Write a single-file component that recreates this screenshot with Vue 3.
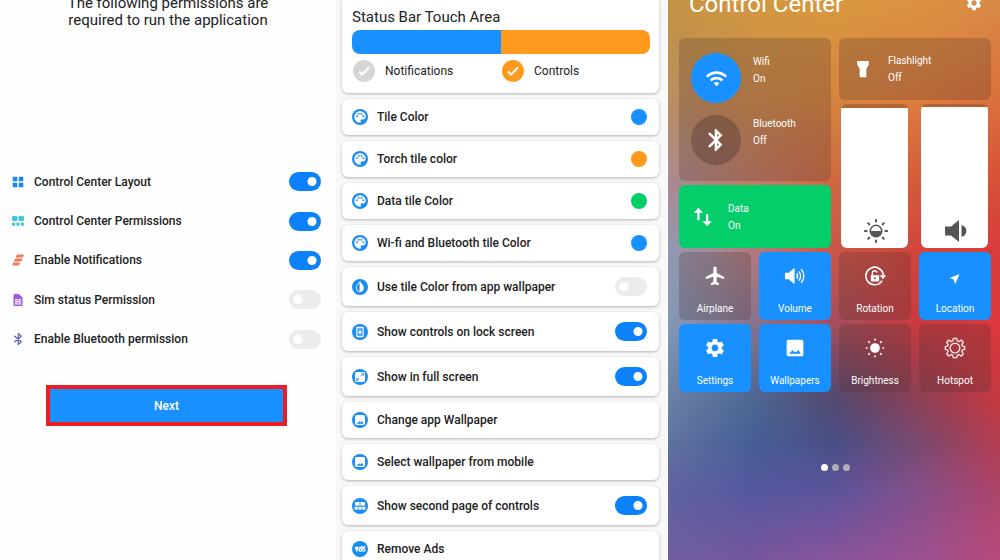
<script setup>
import { ref } from 'vue'

const gear = '<path fill-rule="evenodd" d="M19.14 12.94c.04-.3.06-.61.06-.94 0-.32-.02-.64-.07-.94l2.03-1.58c.18-.14.23-.41.12-.61l-1.92-3.32c-.12-.22-.37-.29-.59-.22l-2.39.96c-.5-.38-1.03-.7-1.62-.94l-.36-2.54c-.04-.24-.24-.41-.48-.41h-3.84c-.24 0-.43.17-.47.41l-.36 2.54c-.59.24-1.13.57-1.62.94l-2.39-.96c-.22-.08-.47 0-.59.22L2.74 8.87c-.12.21-.08.47.12.61l2.03 1.58c-.05.3-.09.63-.09.94s.02.64.07.94l-2.03 1.58c-.18.14-.23.41-.12.61l1.92 3.32c.12.22.37.29.59.22l2.39-.96c.5.38 1.03.7 1.62.94l.36 2.54c.05.24.24.41.48.41h3.84c.24 0 .44-.17.47-.41l.36-2.54c.59-.24 1.13-.56 1.62-.94l2.39.96c.22.08.47 0 .59-.22l1.92-3.32c.12-.22.07-.47-.12-.61l-2.01-1.58zM12 15.6c-1.98 0-3.6-1.62-3.6-3.6s1.62-3.6 3.6-3.6 3.6 1.62 3.6 3.6-1.62 3.6-3.6 3.6z"/>'
const disc = '<circle cx="12" cy="12" r="12" fill="#1b8cf2"/>'
const picture = '<path fill="#fff" fill-rule="evenodd" d="M7 4.500h10a2.500 2.500 0 0 1 2.500 2.500v10a2.500 2.500 0 0 1-2.500 2.500H7A2.500 2.500 0 0 1 4.500 17V7A2.500 2.500 0 0 1 7 4.500zM7 17.500h10.500l-2.700-4.500-1.900 2.700-2-2z"/>'

const icons = {
  gear,
  cog: '<g transform="translate(-1.600 -1.600) scale(1.130)">' + gear + '</g>',
  grid: '<path fill="#1787f5" d="M1.500 1.500h9v9h-9zM13.500 1.500h9v9h-9zM1.500 13.500h9v9h-9zM13.500 13.500h9v9h-9z"/>',
  blocks: '<g fill="#3fc8dc"><rect x="0" y="2" width="11" height="10" rx="2.500"/><rect x="13" y="2" width="11" height="10" rx="2.500"/><rect x="0" y="15" width="6.500" height="6.500" rx="2"/><rect x="8.700" y="15" width="6.500" height="6.500" rx="2"/><rect x="17.500" y="15" width="6.500" height="6.500" rx="2"/></g>',
  bars: '<g fill="#f0795f"><path d="M11 1h12c1 0 1 1 .5 2l-1 2.500c-.4 1-1 1.500-2 1.500h-12c-1 0-1-1-.5-2l1-2.500C9.400 1.500 10 1 11 1z"/><path d="M7.500 9h12c1 0 1 1 .5 2l-1 2.500c-.4 1-1 1.500-2 1.500H5c-1 0-1-1-.5-2l1-2.500C5.900 9.500 6.500 9 7.500 9z"/><path d="M4 17h11c1 0 1 1 .5 2l-1 2.500c-.4 1-1 1.500-2 1.500h-11c-1 0-1-1-.5-2l1-2.500C2.400 17.500 3 17 4 17z"/></g>',
  sim: '<path fill="#a05be0" d="M5 0h9l7 7v15a2 2 0 0 1-2 2H5a2 2 0 0 1-2-2V2a2 2 0 0 1 2-2z"/><path fill="#fff" d="M6 10h12v11H6z"/><path stroke="#a05be0" stroke-width="1.500" d="M6 13.500h12M6 17.500h12M12 10v3.500M12 17.500V21"/>',
  btLeft: '<path fill="none" stroke="#5c5ab4" stroke-width="2.200" stroke-linecap="round" stroke-linejoin="round" d="M5 6l13.500 11.500-6 5.500V1l6 5.500L5 18"/>',
  palette: disc + '<path fill="#fff" transform="translate(1.800 1.800) scale(.85)" d="M12 2C6.500 2 2 6.500 2 12s4.500 10 10 10c1 0 1.700-.7 1.700-1.700 0-.4-.15-.8-.4-1.100-.26-.3-.42-.7-.42-1.100 0-.9.7-1.600 1.600-1.600H17c3 0 5-2.500 5-5.500C22 6 17.500 2 12 2zM6.500 12.200a1.700 1.700 0 1 1 0-3.400 1.700 1.700 0 0 1 0 3.400zM9.600 8a1.700 1.700 0 1 1 0-3.400 1.700 1.700 0 0 1 0 3.400zM14.600 8a1.700 1.700 0 1 1 0-3.400 1.700 1.700 0 0 1 0 3.400zM17.800 12.200a1.700 1.700 0 1 1 0-3.400 1.700 1.700 0 0 1 0 3.400z"/>',
  drop: disc + '<path fill="#fff" d="M12 4c3.500 3.700 5.800 6.300 5.800 9.400A5.900 5.900 0 0 1 12 19.500z"/><path fill="none" stroke="#fff" stroke-width="1.300" d="M12 4c-3.500 3.700-5.500 6.300-5.500 9.400a5.700 5.700 0 0 0 5.500 5.900z"/>',
  lock: disc + '<rect x="6.500" y="4" width="11" height="16" rx="1.500" fill="#fff"/><rect x="8.300" y="6.500" width="7.400" height="11" fill="#1b8cf2"/><rect x="9.800" y="10.800" width="4.400" height="4" fill="#fff"/><path fill="none" stroke="#fff" stroke-width="1" d="M10.800 11V9.500a1.200 1.200 0 0 1 2.400 0V11"/>',
  full: disc + '<rect x="4.500" y="4.500" width="15" height="15" rx="2.500" fill="#fff"/><path fill="none" stroke="#1b8cf2" stroke-width="1.300" d="M14 7.300h3v3M17 7.300l-3.600 3.500M10.600 13.400L7 17M7 13.700V17h3.200"/>',
  picture: disc + picture,
  second: disc + '<g fill="#fff"><rect x="4.500" y="6" width="7" height="5.500" rx="1.300"/><rect x="12.500" y="6" width="7" height="5.500" rx="1.300"/><rect x="4" y="13" width="4.500" height="4.500" rx="1"/><rect x="9.800" y="13" width="4.500" height="4.500" rx="1"/><rect x="15.500" y="13" width="4.500" height="4.500" rx="1"/></g>',
  ads: disc + '<g fill="none" stroke="#fff" stroke-width="2" stroke-linecap="round"><circle cx="6.800" cy="10.700" r="1.500"/><path d="M9 9.500c0 3-.5 4.500-2 5.500"/><circle cx="12.800" cy="13.500" r="2"/><path d="M11.500 9.500L15 8.500v6"/><path d="M19.500 9c-2-1-3.300 1-1.800 2.500 2.300 1 2 4-.5 3.700"/></g>',
  wifi: '<path d="M1 9l2 2c4.970-4.970 13.030-4.970 18 0l2-2C16.930 2.930 7.080 2.930 1 9zm8 8l3 3 3-3c-1.650-1.660-4.340-1.660-6 0zm-4-4l2 2c2.760-2.760 7.240-2.760 10 0l2-2C15.140 9.140 8.870 9.140 5 13z"/>',
  bt: '<path fill-rule="evenodd" stroke="#fff" stroke-width=".4" d="M17.710 7.710L12 2h-1v7.590L6.410 5 5 6.410 10.590 12 5 17.590 6.410 19 11 14.410V22h1l5.710-5.710-4.300-4.290 4.300-4.290zM13 5.830l1.880 1.880L13 9.590V5.830zm1.880 10.460L13 18.170v-3.760l1.880 1.880z"/>',
  torch: '<path d="M5 2.500h14V6.500L16 12v9c0 .6-.4 1-1 1H9c-.6 0-1-.4-1-1v-9L5 6.500z"/>',
  data: '<path d="M6.500 1L1 6.800h4.200V16h2.600V6.800H12zM17 23l5.500-5.800h-4.200V8.500h-2.600v8.700h-4.200z"/>',
  plane: '<path d="M23 15.500v-2.200l-9-5V2.500a2 2 0 0 0-4 0v5.800l-9 5v2.200l9-2.500v6l-2.800 2V23l4.800-1 4.800 1v-2L14 19v-6z"/>',
  volume: '<path d="M0 8v8h4.500l7 6V2l-7 6z"/><g fill="none" stroke="#fff" stroke-width="1.700"><path d="M14 9c1.300 1.700 1.300 4.300 0 6M16.500 6.500c3 3 3 8 0 11M19.300 4c4.500 4.500 4.500 11.500 0 16"/></g>',
  rotation: '<path fill="none" stroke="#fff" stroke-width="2" d="M20.500 17.500A10.500 10.500 0 1 1 22 11"/><path d="M17.500 11h8l-4 5z"/><path fill-rule="evenodd" d="M7 11h10v7.500H7zM12 13.400a1.300 1.300 0 1 0 0 2.600 1.300 1.300 0 0 0 0-2.600z"/><path fill="none" stroke="#fff" stroke-width="1.700" d="M8.800 11V8.700c0-4 5.500-4 5.500-.5"/>',
  location: '<path d="M17.500 9.500L6.300 14v.8l4.200 1.500 1.300 4.700h.8z"/>',
  wallpaper: '<path fill-rule="evenodd" d="M4 2h16a2 2 0 0 1 2 2v16a2 2 0 0 1-2 2H4a2 2 0 0 1-2-2V4a2 2 0 0 1 2-2zM5 19h14l-3-5-2.400 3.500-1.300-1.700-1 1.200-2-2.500z"/>',
  sun: '<circle cx="12" cy="12" r="5.800"/><g stroke="#fff" stroke-width="2" stroke-linecap="round"><path d="M12 1.700v.6M12 21.700v.6M1.700 12h.6M21.700 12h.6M4.700 4.700l.5.500M18.800 18.800l.5.500M19.300 4.700l-.5.500M5.200 18.800l-.5.500"/></g>',
  hotspot: '<g fill="none" stroke="#fff" stroke-opacity=".85" stroke-width="1.700" stroke-linejoin="round"><circle cx="12" cy="12" r="5.800"/><path d="M10 0.500h4l.8 3 1.800.8L19.600 2.500l2.400 2.500-1.800 3 .8 1.800 2.600.7v3.200l-2.600.7-.8 1.800 1.800 3-2.400 2.500-3-1.900-1.800.8-.8 2.900h-4l-.8-2.900-1.800-.8-3 1.900-2.400-2.500 1.800-3-.8-1.800L.4 13.700v-3.200L3 9.800 3.800 8 2 5l2.400-2.500 3 1.800 1.800-.8z"/></g>',
  brightness: '<g fill="none" stroke="#555" stroke-width="1.500"><circle cx="12" cy="12" r="5.700"/></g><path fill="#555" d="M6 12h12a6 6 0 0 1-12 0z"/><g stroke="#555" stroke-width="2" stroke-linecap="round"><path d="M12 .9v1.700M12 21.400v1.700M.9 12h1.700M21.400 12h1.700M4.200 4.200l1 1M18.800 18.800l1 1M19.800 4.200l-1 1M5.200 18.800l-1 1"/></g>',
  speaker: '<path fill="#555" d="M1 7.500v9h6l8 6.500V1L7 7.500zM17.500 6c6.500 1.500 6.500 10.500 0 12z"/>'
}

const permissions = ref([
  { id: 'layout', icon: 'grid', label: 'Control Center Layout', on: true },
  { id: 'perms', icon: 'blocks', label: 'Control Center Permissions', on: true },
  { id: 'notif', icon: 'bars', label: 'Enable Notifications', on: true },
  { id: 'sim', icon: 'sim', label: 'Sim status Permission', on: false },
  { id: 'bt', icon: 'btLeft', label: 'Enable Bluetooth permission', on: false }
])

const settings = ref([
  { id: 'tile', icon: 'palette', label: 'Tile Color', color: '#1890ff' },
  { id: 'torch', icon: 'palette', label: 'Torch tile color', color: '#ff9a1f' },
  { id: 'data', icon: 'palette', label: 'Data tile Color', color: '#04ce6a' },
  { id: 'wifi', icon: 'palette', label: 'Wi-fi and Bluetooth tile Color', color: '#1890ff' },
  { id: 'auto', icon: 'drop', label: 'Use tile Color from app wallpaper', toggle: true, on: false },
  { id: 'lock', icon: 'lock', label: 'Show controls on lock screen', toggle: true, on: true },
  { id: 'full', icon: 'full', label: 'Show in full screen', toggle: true, on: true },
  { id: 'change', icon: 'picture', label: 'Change app Wallpaper' },
  { id: 'select', icon: 'picture', label: 'Select wallpaper from mobile' },
  { id: 'second', icon: 'second', label: 'Show second page of controls', toggle: true, on: true },
  { id: 'ads', icon: 'ads', label: 'Remove Ads' }
])

const tiles = ref([
  { icon: 'plane', label: 'Airplane', on: false },
  { icon: 'volume', label: 'Volume', on: true },
  { icon: 'rotation', label: 'Rotation', on: false },
  { icon: 'location', label: 'Location', on: true },
  { icon: 'cog', label: 'Settings', on: true },
  { icon: 'wallpaper', label: 'Wallpapers', on: true },
  { icon: 'sun', label: 'Brightness', on: false },
  { icon: 'hotspot', label: 'Hotspot', on: false }
])

const area = ref({ notifications: false, controls: true })
const brightness = ref(97)
const volume = ref(98)

// Wallpaper colour mesh: each band fades in over the one above it.
const mesh = [
  [0, '#c29343', '#d29840', '#d9993f', '#dc9342', '#d98a46'],
  [18, '#b98e62', '#cc8a4c', '#d5843f', '#dc7c3e', '#d9703c'],
  [33, '#a88a95', '#c07c6a', '#ce6842', '#d45a3b', '#d64f39'],
  [45, '#929ab4', '#b07c80', '#cb5648', '#d2453c', '#d83c3b'],
  [58, '#8398b6', '#857490', '#a44d5c', '#c93b40', '#dc383e'],
  [71, '#6a82a5', '#4e6894', '#52496f', '#8b4055', '#c63841'],
  [79, '#6072a0', '#475f96', '#4a4f86', '#784a70', '#b43d50'],
  [88, '#6062a0', '#5658a0', '#5d549c', '#84508a', '#ae446a'],
  [100, '#6f5f9f', '#76579c', '#8a549c', '#9a5090', '#b84b7b']
]
const bands = mesh.map(([stop, ...colors], i) => {
  const mask = i ? `linear-gradient(to bottom, transparent ${mesh[i - 1][0]}%, #000 ${stop}%)` : 'none'
  return { background: `linear-gradient(to right, ${colors.join(', ')})`, maskImage: mask }
})

const fill = (v) => ({
  background: `linear-gradient(to top, #fff ${v}%, rgba(90, 50, 30, 0.3) ${v}%)`
})
</script>

<template>
  <main class="screens">
    <section class="permissions">
      <h1 class="intro">The following permissions are required to run the application</h1>
      <ul class="perm-list">
        <li v-for="p in permissions" :key="p.id" class="perm-row">
          <svg class="icon-s" viewBox="0 0 24 24" aria-hidden="true" v-html="icons[p.icon]"></svg>
          <label class="row-label" :for="'p-' + p.id">{{ p.label }}</label>
          <input :id="'p-' + p.id" v-model="p.on" class="switch" type="checkbox" role="switch">
        </li>
      </ul>
      <button class="next" type="button">Next</button>
    </section>

    <section class="settings">
      <div class="card touch-card">
        <h2 class="touch-title">Status Bar Touch Area</h2>
        <div class="touch-bar"><span class="half blue"></span><span class="half orange"></span></div>
        <div class="touch-options">
          <label class="option">
            <span class="check-wrap">
              <input v-model="area.notifications" class="check" type="checkbox">
              <svg class="tick" viewBox="0 0 22 22" aria-hidden="true"><path d="M6 11.500l3 3L16 7.500" /></svg>
            </span>Notifications
          </label>
          <label class="option">
            <span class="check-wrap">
              <input v-model="area.controls" class="check" type="checkbox">
              <svg class="tick" viewBox="0 0 22 22" aria-hidden="true"><path d="M6 11.500l3 3L16 7.500" /></svg>
            </span>Controls
          </label>
        </div>
      </div>
      <div v-for="s in settings" :key="s.id" class="card set-row" :class="{ tall: s.toggle }">
        <svg class="icon-m" viewBox="0 0 24 24" aria-hidden="true" v-html="icons[s.icon]"></svg>
        <template v-if="s.toggle">
          <label class="row-label" :for="'s-' + s.id">{{ s.label }}</label>
          <input :id="'s-' + s.id" v-model="s.on" class="switch" type="checkbox" role="switch">
        </template>
        <button v-else class="row-button" type="button">
          {{ s.label }}
          <span v-if="s.color" class="swatch" :style="{ background: s.color }"></span>
        </button>
      </div>
    </section>

    <section class="center">
      <div class="wallpaper" aria-hidden="true">
        <div v-for="(b, i) in bands" :key="i" class="band" :style="b"></div>
      </div>
      <header class="center-head">
        <h2 class="center-title">Control Center</h2>
        <button class="gear" type="button" aria-label="Open settings">
          <svg class="icon-gear" viewBox="0 0 24 24" v-html="icons.gear"></svg>
        </button>
      </header>
      <div class="controls">
        <div class="tile radio-tile">
          <button class="radio" type="button">
            <span class="round active"><svg class="icon-l" viewBox="0 0 24 24" v-html="icons.wifi"></svg></span>
            <span class="state">Wifi<br>On</span>
          </button>
          <button class="radio" type="button">
            <span class="round"><svg class="icon-xl" viewBox="0 0 24 24" v-html="icons.bt"></svg></span>
            <span class="state">Bluetooth<br>Off</span>
          </button>
        </div>
        <button class="tile wide green" type="button">
          <svg class="icon-t" viewBox="0 0 24 24" v-html="icons.data"></svg>
          <span class="state">Data<br>On</span>
        </button>
        <div class="side">
          <button class="tile wide torch" type="button">
            <svg class="icon-t" viewBox="0 0 24 24" v-html="icons.torch"></svg>
            <span class="state">Flashlight<br>Off</span>
          </button>
          <div class="sliders">
            <div class="slider">
              <input v-model="brightness" class="range" type="range" aria-label="Screen brightness" :style="fill(brightness)">
              <svg class="slider-icon" viewBox="0 0 24 24" aria-hidden="true" v-html="icons.brightness"></svg>
            </div>
            <div class="slider">
              <input v-model="volume" class="range" type="range" aria-label="Media volume" :style="fill(volume)">
              <svg class="slider-icon" viewBox="0 0 24 24" aria-hidden="true" v-html="icons.speaker"></svg>
            </div>
          </div>
        </div>
        <button v-for="t in tiles" :key="t.label" class="tile small" :class="{ active: t.on }" type="button" @click="t.on = !t.on">
          <svg class="icon-t" viewBox="0 0 24 24" v-html="icons[t.icon]"></svg>
          {{ t.label }}
        </button>
      </div>
      <nav class="dots" aria-label="Pages">
        <button class="dot current" type="button" aria-label="Page 1"></button>
        <button class="dot" type="button" aria-label="Page 2"></button>
        <button class="dot" type="button" aria-label="Page 3"></button>
      </nav>
    </section>
  </main>
</template>

<style>
body {
  background: #fefefe;
}
</style>

<style scoped>
.screens {
  display: grid;
  grid-template-columns: 336fr 332fr 332fr;
  height: 100vh;
  overflow: hidden;
  font-family: Roboto, "Liberation Sans", sans-serif;
  color: #222;
}
section {
  min-width: 0;
  overflow: hidden;
}
button {
  border: 0;
  padding: 0;
  margin: 0;
  background: none;
  font: inherit;
  color: inherit;
  cursor: pointer;
}
h1, h2 {
  margin: 0;
  font-weight: 400;
}
svg {
  display: block;
  flex: none;
  overflow: visible;
}

.permissions {
  display: flex;
  flex-direction: column;
  background: #fefefe;
}
.intro {
  align-self: center;
  width: 208px;
  margin-top: -5px;
  font-size: 15px;
  line-height: 17px;
  text-align: center;
}
.perm-list {
  display: grid;
  grid-auto-rows: 1fr;
  height: 197px;
  margin: 133px 15px 0 12px;
  padding: 0;
  list-style: none;
}
.perm-row {
  display: flex;
  align-items: center;
  gap: 10px;
}
.row-label {
  flex: 1;
  font-size: 12px;
  font-weight: 500;
}
.icon-s {
  width: 12px;
  height: 12px;
}
.switch {
  appearance: none;
  flex: none;
  width: 32px;
  height: 19px;
  margin: 0;
  border-radius: 10px;
  background: radial-gradient(circle at 9px 50%, #fff 4px, transparent 5px) #ececec;
}
.switch:checked {
  background: radial-gradient(circle at 23px 50%, #fff 4px, transparent 5px) #0c82fa;
}
.next {
  margin: 26px 49px 0 46px;
  height: 41px;
  border: 4px solid #ee1c25;
  background: #1890ff;
  color: #fff;
  font-size: 12px;
  font-weight: 500;
}

.settings {
  display: flex;
  flex-direction: column;
  gap: 6px;
  padding: 0 8px 0 6px;
  border-right: 1px solid #fff;
  background: #f8f8f8;
}
.card {
  flex: none;
  border-radius: 6px;
  background: #fff;
  box-shadow: 0 1px 3px rgba(0, 0, 0, 0.28);
}
.touch-card {
  padding: 8px 9px 11px 10px;
  border-radius: 0 0 6px 6px;
}
.touch-title {
  font-size: 15px;
  line-height: 18px;
}
.touch-bar {
  display: flex;
  height: 24px;
  margin-top: 4px;
  border-radius: 8px;
  overflow: hidden;
}
.half {
  flex: 1;
}
.blue {
  background: #1890ff;
}
.orange {
  background: #ff9a1f;
}
.touch-options {
  display: grid;
  grid-template-columns: 1fr 1fr;
  margin-top: 6px;
}
.option {
  display: flex;
  align-items: center;
  gap: 10px;
  padding-left: 1px;
  font-size: 12px;
}
.check-wrap {
  display: grid;
  width: 22px;
  height: 22px;
}
.check {
  appearance: none;
  grid-area: 1 / 1;
  width: 22px;
  height: 22px;
  margin: 0;
  border-radius: 50%;
  background: #d6d6d6;
}
.check:checked {
  background: #ff9a1f;
}
.tick {
  grid-area: 1 / 1;
  width: 22px;
  height: 22px;
  fill: none;
  stroke: #fff;
  stroke-width: 2;
  pointer-events: none;
}
.set-row {
  display: flex;
  align-items: center;
  gap: 9px;
  height: 36px;
  padding: 0 12px 0 10px;
}
.tall {
  height: 39px;
}
.icon-m {
  width: 16px;
  height: 16px;
}
.row-button {
  flex: 1;
  display: flex;
  align-items: center;
  justify-content: space-between;
  height: 100%;
  font-size: 12px;
  font-weight: 500;
}
.swatch {
  width: 16px;
  height: 16px;
  border-radius: 50%;
}

.center {
  position: relative;
  padding: 0 9px 0 11px;
  color: #fff;
  font-size: 10px;
}
.center svg {
  fill: #fff;
}
.wallpaper,
.band {
  position: absolute;
  inset: 0;
}
.center-head,
.controls,
.dots {
  position: relative;
}
.center-head {
  display: flex;
  justify-content: space-between;
  height: 38px;
  padding: 0 8px 0 10px;
}
.center-title {
  margin-top: -10px;
  font-size: 24px;
  line-height: 28px;
}
.gear {
  align-self: flex-start;
  margin-top: -6px;
}
.icon-gear {
  width: 18px;
  height: 18px;
}
.controls {
  display: grid;
  grid-template-columns: repeat(4, 1fr);
  grid-template-rows: 143px 63px 68px 68px;
  gap: 4px 8px;
}
.tile {
  border-radius: 6px;
  background: rgba(65, 45, 48, 0.24);
}
.radio-tile {
  grid-area: 1 / 1 / 2 / 3;
  display: flex;
  flex-direction: column;
  gap: 12px;
  padding: 15px 12px;
}
.radio {
  display: flex;
  align-items: flex-start;
  gap: 12px;
  text-align: left;
}
.round {
  display: grid;
  place-items: center;
  width: 50px;
  height: 50px;
  border-radius: 50%;
  background: rgba(80, 50, 50, 0.38);
}
.active,
.round.active {
  background: #1890ff;
}
.state {
  line-height: 17px;
  text-align: left;
}
.wide {
  display: flex;
  align-items: center;
  gap: 15px;
  padding-left: 14px;
}
.green {
  grid-area: 2 / 1 / 3 / 3;
  background: #04ce6a;
}
.side {
  grid-area: 1 / 3 / 3 / 5;
  display: flex;
  flex-direction: column;
  gap: 4px;
}
.torch {
  height: 62px;
}
.sliders {
  flex: 1;
  display: grid;
  grid-template-columns: 1fr 1fr;
  gap: 8px;
}
.slider {
  position: relative;
  margin: 0 3px 0 2px;
}
.range {
  appearance: none;
  display: block;
  width: 100%;
  height: 144px;
  margin: 0;
  border-radius: 6px;
  writing-mode: vertical-lr;
  direction: rtl;
}
.range::-webkit-slider-thumb {
  appearance: none;
  width: 100%;
  height: 1px;
}
.slider-icon {
  position: absolute;
  bottom: 5px;
  left: 2px;
  right: 0;
  width: 24px;
  height: 24px;
  margin: 0 auto;
  pointer-events: none;
}
.small {
  display: flex;
  flex-direction: column;
  align-items: center;
  gap: 17px;
  padding-top: 14px;
  line-height: 12px;
}
.small.active {
  background: #1890ff;
}
.icon-t {
  width: 20px;
  height: 20px;
}
.icon-l {
  width: 23px;
  height: 23px;
}
.icon-xl {
  width: 26px;
  height: 26px;
}
.dots {
  display: flex;
  justify-content: center;
  gap: 4px;
  margin-top: 72px;
}
.dot {
  width: 7px;
  height: 7px;
  border-radius: 50%;
  background: #b0aeb2;
}
.current {
  background: #fff;
}
</style>
